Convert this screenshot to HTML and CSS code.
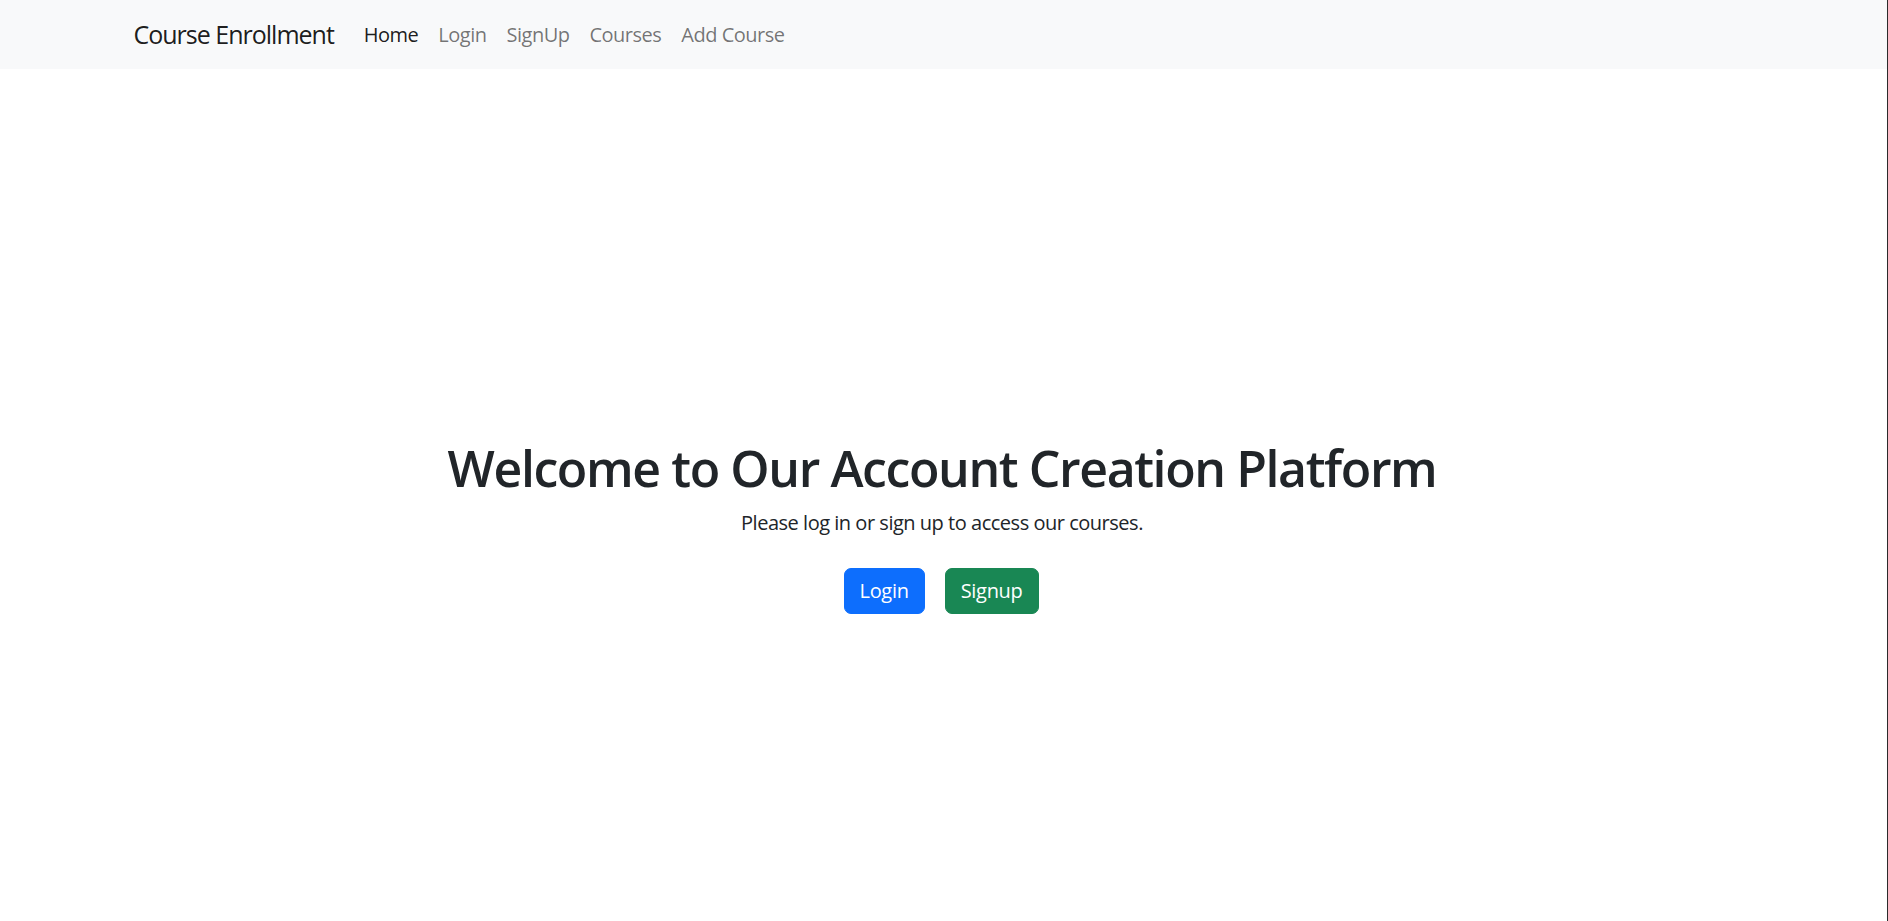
FILE: index.html
```html
<!DOCTYPE html>
<html lang="en">
<head>
<meta charset="utf-8">
<title>Course Enrollment</title>
<link rel="stylesheet" href="styles.css">
</head>
<body>
<div class="page">
  <nav class="navbar">
    <div class="container">
      <a class="brand" href="#">Course Enrollment</a>
      <ul class="nav">
        <li><a class="nav-link active" href="#">Home</a></li>
        <li><a class="nav-link" href="#">Login</a></li>
        <li><a class="nav-link" href="#">SignUp</a></li>
        <li><a class="nav-link" href="#">Courses</a></li>
        <li><a class="nav-link" href="#">Add Course</a></li>
      </ul>
    </div>
  </nav>
  <main class="hero">
    <h1 class="hero-title">Welcome to Our Account Creation Platform</h1>
    <p class="hero-text">Please log in or sign up to access our courses.</p>
    <div class="actions">
      <a class="btn btn-primary" href="#">Login</a>
      <a class="btn btn-success" href="#">Signup</a>
    </div>
  </main>
</div>
</body>
</html>
```

FILE: styles.css
```css
* { box-sizing: border-box; }
html, body { margin: 0; padding: 0; }
body {
  font-family: "Open Sans", "Noto Sans", sans-serif;
  color: #212529;
  background: #fff;
}
.page {
  min-height: 100vh;
  border-right: 1px solid #2b2b2b;
  display: flex;
  flex-direction: column;
}
.navbar {
  background: #f8f9fa;
  height: 69px;
  display: flex;
  align-items: center;
}
.container {
  width: 1650px;
  margin: 0 auto;
  padding: 0 15px;
  display: flex;
  align-items: center;
}
.brand {
  font-size: 25px;
  letter-spacing: -0.04em;
  color: rgba(0,0,0,.9);
  text-decoration: none;
  margin-right: 20px;
  line-height: 1.5;
}
.nav {
  list-style: none;
  margin: 0;
  padding: 0;
  display: flex;
}
.nav-link {
  display: block;
  padding: 10px;
  font-size: 20px;
  letter-spacing: -0.025em;
  line-height: 1.5;
  color: rgba(0,0,0,.55);
  text-decoration: none;
}
.nav-link.active { color: rgba(0,0,0,.9); }
.hero {
  display: flex;
  flex-direction: column;
  align-items: center;
  text-align: center;
  padding: 369px 3px 0 0;
}
.hero-title {
  margin: 0 0 10px;
  font-size: 50px;
  font-weight: 600;
  letter-spacing: -0.028em;
  line-height: 1.2;
}
.hero-text {
  margin: 0 0 30px;
  font-size: 20px;
  letter-spacing: -0.024em;
  line-height: 1.5;
}
.actions {
  display: flex;
  gap: 20px;
  padding-right: 2px;
}
.btn {
  display: inline-block;
  padding: 7px 15px;
  font-size: 20px;
  letter-spacing: -0.015em;
  line-height: 1.5;
  border-radius: 7px;
  color: #fff;
  text-decoration: none;
  border: 1px solid transparent;
}
.btn-primary { background: #0d6efd; border-color: #0d6efd; }
.btn-success { background: #198754; border-color: #198754; }
```
